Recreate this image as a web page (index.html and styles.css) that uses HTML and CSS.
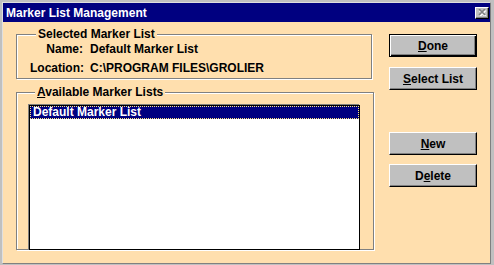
FILE: index.html
```html
<!DOCTYPE html>
<html lang="en">
<head>
    <meta charset="UTF-8">
    <title>Marker List Management</title>
    <link rel="stylesheet" href="styles.css">
</head>
<body>
    <div class="window">
        <div class="title-bar">
            <span class="title">Marker List Management</span>
            <span class="close-button">
                <svg width="8" height="7" viewBox="0 0 8 7">
                    <path d="M1 1L7 7M7 1L1 7" stroke="#fff" stroke-width="1.6" transform="translate(0.6 0.6)"/>
                    <path d="M1 0L7 6M7 0L1 6" stroke="#808080" stroke-width="1.6"/>
                </svg>
            </span>
        </div>
        <div class="dialog">
            <div class="left-column">
                <fieldset class="group group-selected">
                    <legend>Selected Marker List</legend>
                    <div class="info-grid">
                        <span class="info-label">Name:</span>
                        <span>Default Marker List</span>
                        <span class="info-label">Location:</span>
                        <span>C:\PROGRAM FILES\GROLIER</span>
                    </div>
                </fieldset>
                <fieldset class="group group-available">
                    <legend><u>A</u>vailable Marker Lists</legend>
                    <div class="listbox">
                        <div class="list-item selected">Default Marker List</div>
                    </div>
                </fieldset>
            </div>
            <div class="button-column">
                <button class="btn btn-default"><u>D</u>one</button>
                <button class="btn btn-select"><u>S</u>elect List</button>
                <button class="btn btn-new"><u>N</u>ew</button>
                <button class="btn btn-delete">D<u>e</u>lete</button>
            </div>
        </div>
    </div>
</body>
</html>
```

FILE: styles.css
```css
* {
    box-sizing: border-box;
    padding: 0;
    margin: 0;
}

body {
    font-family: "Liberation Sans", Arial, sans-serif;
    font-size: 12px;
    font-weight: bold;
    line-height: 14px;
    color: #000;
    background-color: #c0c0c0;
    padding: 2px 0 0 2px;
}

.window {
    width: 489px;
    height: 262px;
    border: 1px solid;
    border-color: #dfdfdf #808080 #808080 #dfdfdf;
    background-color: #ffdfae;
    display: flex;
    flex-direction: column;
}

.title-bar {
    height: 19px;
    background-color: #000080;
    color: #fff;
    display: flex;
    align-items: center;
    justify-content: space-between;
    padding: 0 1px 0 3px;
}

.close-button {
    width: 14px;
    height: 12px;
    background-color: #c0c0c0;
    border: 1px solid;
    border-color: #fff #000 #000 #fff;
    box-shadow: inset -1px -1px 0 #808080;
    display: flex;
    align-items: center;
    justify-content: center;
}

.dialog {
    flex: 1;
    display: flex;
    padding: 5px 0 0 13px;
}

.left-column {
    width: 358px;
}

.group {
    border: 1px solid #808080;
    box-shadow: 1px 1px 0 #fff, inset 1px 1px 0 #fff;
    min-width: 0;
}

.group legend {
    margin-left: 6px;
    padding: 0 2px;
    background-color: #ffdfae;
}

.group-selected {
    width: 356px;
    padding: 1px 0 3px 13px;
}

.info-grid {
    display: grid;
    grid-template-columns: 53px auto;
    column-gap: 7px;
    row-gap: 5px;
}

.info-label {
    text-align: right;
}

.group-available {
    width: 358px;
    margin-top: 6px;
    padding: 0 0 0 12px;
}

.listbox {
    width: 331px;
    height: 145px;
    margin-top: 6px;
    margin-bottom: -1px;
    background-color: #fff;
    border: 1px solid #000;
    box-shadow: -1px -1px 0 #808080;
    position: relative;
}

.list-item {
    height: 13px;
    line-height: 11px;
    padding-left: 2px;
}

.list-item.selected {
    background-color: #000080;
    color: #fff;
    border: 1px dotted #ffe680;
}

.button-column {
    display: flex;
    flex-direction: column;
    margin: 7px 0 0 15px;
}

.btn {
    width: 88px;
    height: 23px;
    font: inherit;
    color: #000;
    background-color: #c0c0c0;
    border: 1px solid;
    border-color: #fff #000 #000 #fff;
    box-shadow: inset -1px -1px 0 #808080;
}

.btn-default {
    border-color: #000;
    box-shadow: inset 1px 1px 0 #fff, inset -1px -1px 0 #000, inset -2px -2px 0 #808080;
}

.btn-select {
    margin-top: 10px;
}

.btn-new {
    margin-top: 42px;
}

.btn-delete {
    margin-top: 9px;
}
```
